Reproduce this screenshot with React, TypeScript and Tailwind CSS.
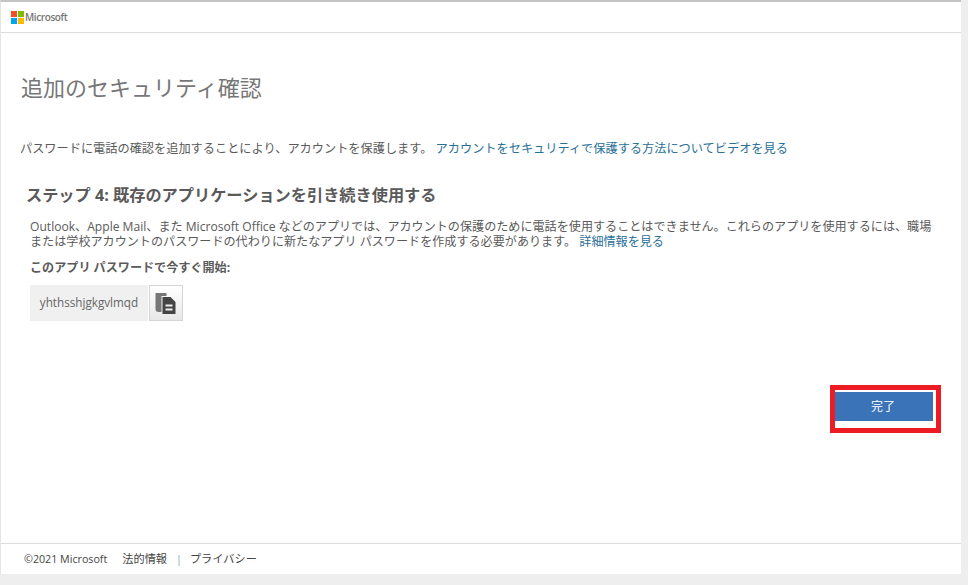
const jp = { fontFamily: '"Open Sans", "Noto Sans CJK JP", sans-serif' };
export default function App() {
  return (
    <div className="h-[585px] w-[968px] overflow-hidden bg-[#eeeeee] text-[#5a5a5a]" style={jp}>
      <div className="flex h-[574px] w-[961px] flex-col border-t-2 border-l border-t-[#c4c4c4] border-l-[#e4e4e4] bg-white">
        <header className="flex h-[31px] shrink-0 items-center gap-[1px] border-b border-[#dddddd] pl-[10px]">
          <svg width="13" height="13" viewBox="0 0 13 13"><rect width="6" height="6" fill="#f25022"/><rect x="7" width="6" height="6" fill="#7fba00"/><rect y="7" width="6" height="6" fill="#00a4ef"/><rect x="7" y="7" width="6" height="6" fill="#ffb900"/></svg>
          <span className="text-[10px] font-semibold tracking-[-0.4px] text-[#777777]">Microsoft</span>
        </header>
        <main className="flex flex-1 flex-col pl-[20px] pr-[20px]">
          <h1 className="mt-[38px] text-[22px] leading-[32px] text-[#777777]">追加のセキュリティ確認</h1>
          <p className="mt-[37px] -ml-px text-[12.2px] leading-[18px] whitespace-nowrap">パスワードに電話の確認を追加することにより、アカウントを保護します。 <span className="text-[#2a6f97]">アカウントをセキュリティで保護する方法についてビデオを見る</span></p>
          <h2 className="mt-[25px] pl-[5px] text-[16.2px] font-bold leading-[24px]">ステップ 4: 既存のアプリケーションを引き続き使用する</h2>
          <div className="pl-[9px]">
            <p className="mt-[12px] w-[905px] text-[12.1px] leading-[15px]">Outlook、Apple Mail、また Microsoft Office などのアプリでは、アカウントの保護のために電話を使用することはできません。これらのアプリを使用するには、職場または学校アカウントのパスワードの代わりに新たなアプリ パスワードを作成する必要があります。 <span className="text-[#2a6f97]">詳細情報を見る</span></p>
            <p className="mt-[11px] text-[12.1px] font-bold leading-[16px]">このアプリ パスワードで今すぐ開始:</p>
            <div className="mt-[9px] flex h-[36px] items-stretch gap-[1px]">
              <div className="flex w-[118px] items-center justify-center bg-[#f0f0f0] text-[11.7px] text-[#666666]">yhthsshjgkgvlmqd</div>
              <button className="flex w-[34px] items-center justify-center border border-[#d4d4d4] bg-gradient-to-b from-[#ffffff] to-[#e8e8e8]" aria-label="コピー">
                <svg width="24" height="24" viewBox="0 0 24 24">
                  <path d="M1.5 2h11v3H7.5v16H4.5a3 3 0 0 1-3-3z" fill="#777777"/>
                  <path d="M8.5 6h8l5 5v12h-13z" fill="#444444"/>
                  <rect x="11.5" y="13.5" width="7" height="2" fill="#f0f0f0"/>
                  <rect x="11.5" y="17.5" width="7" height="2" fill="#f0f0f0"/>
                </svg>
              </button>
            </div>
          </div>
          <div className="mt-[64px] flex justify-end">
            <div className="h-[48px] w-[111px] border-[5px] border-[#ed1c24] bg-white pt-[2px]">
              <button className="flex h-[29px] w-[98px] items-center justify-center bg-[#3b73b9] pr-[2px] text-[12px] text-white">完了</button>
            </div>
          </div>
        </main>
        <footer className="flex h-[31px] shrink-0 items-center border-t border-[#dddddd] pl-[23px] text-[10.7px] text-[#444444]">
          <span>©2021 Microsoft</span>
          <span className="ml-[15px] text-[11.2px]">法的情報</span>
          <span className="ml-[9px] text-[#7a9fd0]">|</span>
          <span className="ml-[8px] text-[11.2px]">プライバシー</span>
        </footer>
      </div>
    </div>
  );
}
